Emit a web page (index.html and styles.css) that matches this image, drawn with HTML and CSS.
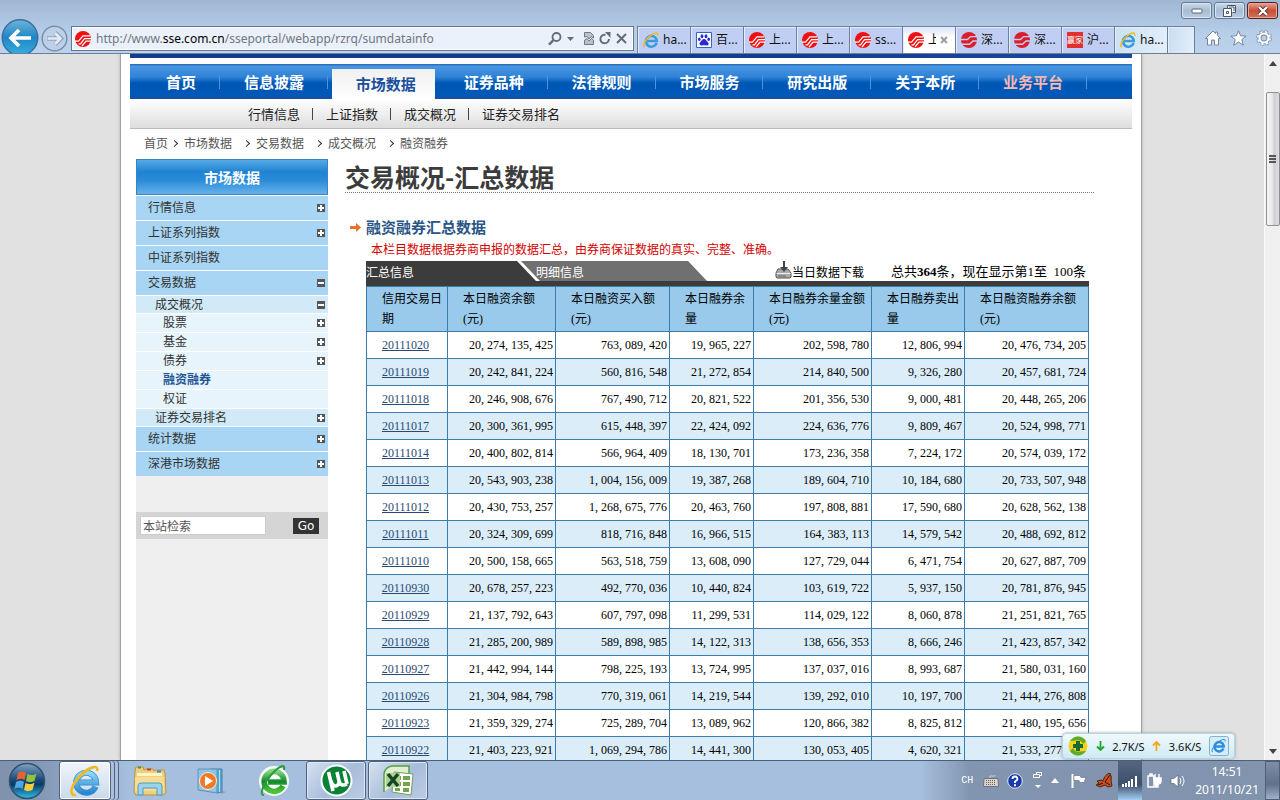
FILE: index.html
```html
<!DOCTYPE html>
<html lang="zh-CN">
<head>
<meta charset="utf-8">
<title>交易概况-汇总数据</title>
<link rel="stylesheet" href="styles.css">
</head>
<body>
<svg class="defs" aria-hidden="true">
  <defs>
    <linearGradient id="orb" x1="0" y1="0" x2="0" y2="1"><stop offset="0" stop-color="#7fa5c4"/><stop offset=".45" stop-color="#1d4c7c"/><stop offset=".6" stop-color="#0b3a66"/><stop offset="1" stop-color="#2fc1ee"/></linearGradient>
    <linearGradient id="back" x1="0" y1="0" x2="0" y2="1"><stop offset="0" stop-color="#6fb4dc"/><stop offset=".5" stop-color="#1f86c4"/><stop offset="1" stop-color="#35b0e4"/></linearGradient>
    <linearGradient id="green" x1="0" y1="0" x2="0" y2="1"><stop offset="0" stop-color="#7fd67f"/><stop offset=".5" stop-color="#12892c"/><stop offset="1" stop-color="#4cc436"/></linearGradient>
    <linearGradient id="ieblue" x1="0" y1="0" x2="0" y2="1"><stop offset="0" stop-color="#8fd8f8"/><stop offset="1" stop-color="#2a86d0"/></linearGradient>
  </defs>
  <symbol id="sse" viewBox="0 0 16 16"><circle cx="8" cy="8" r="8" fill="#ee1111"/><path d="M0 10.2h3.5L8 4.8h7M3.5 12.8h2L9.5 7.6h6.5M7 15l4-4.8h5" fill="none" stroke="#fff" stroke-width="1.2"/></symbol>
  <symbol id="szse" viewBox="0 0 16 16"><circle cx="8" cy="8" r="8" fill="#dc1e2a"/><path d="M16 4.600H9.500L6.500 7.500H0M16 9h-4L8.500 12.200H1" fill="none" stroke="#c3cdf3" stroke-width="1.400"/></symbol>
  <symbol id="ie" viewBox="0 0 16 16"><path d="M13.600 10.800A5.400 5.400 0 1 1 13.400 7.200L13.700 9H4" fill="none" stroke="#3b9be0" stroke-width="2.600"/><path d="M1.800 15C-.8 13.500 2.500 7.500 7.500 3.600 11.500.4 15.600-.2 14.600 4" fill="none" stroke="#f0b91e" stroke-width="1.500"/></symbol>
  <symbol id="ie-big" viewBox="0 0 30 32"><path d="M25.500 21.500A10 10 0 1 1 25.500 14L26 17.500H9" fill="none" stroke="#3189c8" stroke-width="6"/><path d="M25.500 21.500A10 10 0 1 1 25.500 14L26 17.500H9" fill="none" stroke="url(#ieblue)" stroke-width="4.600"/><path d="M6 30C-2 31 1 20 11 10 19 2 29-1 27 6" fill="none" stroke="#f2bb1c" stroke-width="2.600"/></symbol>
</svg>

<header class="browser">
  <div class="caption">
    <button class="win" aria-label="Minimize"><svg width="12" height="6" viewBox="0 0 12 6"><rect x="1" y="1" width="10" height="4" rx="1" fill="#fff" stroke="#5a6470"/></svg></button>
    <button class="win" aria-label="Restore"><svg width="13" height="12" viewBox="0 0 13 12"><path d="M4.500 3.500v-3h8v7h-3M6 2h5v4" fill="#fff" stroke="#4b5664"/><path d="M.5 3.500h8v8h-8zM3.500 6.500h2v2h-2z" fill="#fff" stroke="#4b5664"/></svg></button>
    <button class="win close" aria-label="Close"><svg width="12" height="10" viewBox="0 0 12 10"><path d="M2 1l8 8M10 1L2 9" stroke="#5b2a2a" stroke-width="4"/><path d="M2 1l8 8M10 1L2 9" stroke="#fff" stroke-width="2.400"/></svg></button>
  </div>
  <div class="bar">
    <div class="history">
      <button class="back" aria-label="Back"><svg width="38" height="37" viewBox="0 0 38 37"><circle cx="19" cy="18.500" r="17.800" fill="url(#back)" stroke="#3c6f9c" stroke-width="1.400"/><path d="M10 19h20M18 11l-8 8 8 8" fill="none" stroke="#fff" stroke-width="3.600"/></svg></button>
      <button class="fwd" aria-label="Forward"><svg width="27" height="27" viewBox="0 0 27 27"><circle cx="13.500" cy="13.500" r="12.300" fill="#bcd0e8" stroke="#7a8fa9" stroke-width="1.500"/><path d="M6 13.500h13M14 7.500l6 6-6 6" fill="none" stroke="#8ea2ba" stroke-width="4.500"/><path d="M6.500 13.500H19M14 8l5.500 5.500L14 19" fill="none" stroke="#e2ebf6" stroke-width="2.600"/></svg></button>
    </div>
    <div class="address">
      <svg width="16" height="16"><use href="#sse"/></svg>
      <div class="url">http://www.<b>sse.com.cn</b>/sseportal/webapp/rzrq/sumdatainfo</div>
      <button aria-label="Search"><svg width="14" height="14" viewBox="0 0 14 14"><circle cx="8.500" cy="5" r="4" fill="none" stroke="#646c76" stroke-width="1.800"/><path d="M5.500 8L1 12.700" stroke="#646c76" stroke-width="2.400"/></svg></button>
      <button aria-label="Search options"><svg width="7" height="4"><path d="M0 0h7L3.500 4z" fill="#646c76"/></svg></button>
      <button class="compat" aria-label="Compatibility view"><svg width="10" height="13" viewBox="0 0 10 13"><path d="M.5 5V.5h6l3 3V6L7 4.500 5 7 3 4.500zM.5 8L3 6.500 5 9l2.500-2.500L9.500 8v4.500h-9z" fill="#b9c0ca" stroke="#707882"/></svg></button>
      <button aria-label="Refresh"><svg width="12" height="13" viewBox="0 0 12 13"><path d="M10 7a4.300 4.300 0 1 1-3.500-4.200" fill="none" stroke="#646c76" stroke-width="1.900"/><path d="M6 0h5.500v6z" fill="#646c76"/></svg></button>
      <button aria-label="Stop"><svg width="11" height="11"><path d="M1 1l9 9M10 1l-9 9" stroke="#646c76" stroke-width="2"/></svg></button>
    </div>
    <nav class="tabs">
      <button class="tab"><svg width="16" height="16"><use href="#ie"/></svg>ha...</button>
      <button class="tab"><svg width="16" height="16" viewBox="0 0 16 16"><path d="M.5.5h15v15H.5z" fill="#fff" stroke="#3369b5"/><g fill="#2b2bd0"><ellipse cx="6" cy="4.200" rx="1.400" ry="2"/><ellipse cx="10" cy="4.200" rx="1.400" ry="2"/><ellipse cx="3.300" cy="7.200" rx="1.300" ry="1.700"/><ellipse cx="12.700" cy="7.200" rx="1.300" ry="1.700"/><path d="M8 7c2 0 2.500 2 4 3.500S12 14 10.500 13.500 5.500 13.500 5 13.500 2.500 12 4 10.500 6 7 8 7z"/></g></svg>百...</button>
      <button class="tab"><svg width="16" height="16"><use href="#sse"/></svg>上...</button>
      <button class="tab"><svg width="16" height="16"><use href="#sse"/></svg>上...</button>
      <button class="tab"><svg width="16" height="16"><use href="#sse"/></svg>ss...</button>
      <button class="tab current"><svg width="16" height="16"><use href="#sse"/></svg><span class="cut">上</span><svg width="8" height="8"><path d="M1 1l6 6M7 1L1 7" stroke="#999" stroke-width="1.800"/></svg></button>
      <button class="tab"><svg width="16" height="16"><use href="#szse"/></svg>深...</button>
      <button class="tab"><svg width="16" height="16"><use href="#szse"/></svg>深...</button>
      <button class="tab"><span class="seal">赢家</span>沪...</button>
      <button class="tab pale"><svg width="16" height="16"><use href="#ie"/></svg>ha...</button>
      <button class="tab new" aria-label="New tab"></button>
    </nav>
    <div class="tools">
      <button aria-label="Home"><svg width="16" height="16" viewBox="0 0 16 16"><path d="M8 1l2.500 2.500V2h2v3.500L15.500 8.500h-2V15H9.500v-5h-3v5h-4V8.500h-2z" fill="#fff" stroke="#75879f"/></svg></button>
      <button aria-label="Favorites"><svg width="17" height="16" viewBox="0 0 17 16"><path d="M8.500.8l2.100 5 5.500.3-4.300 3.500 1.500 5.600-4.800-3.200-4.800 3.200 1.500-5.600L.9 6.100l5.500-.3z" fill="#fff" stroke="#75879f"/></svg></button>
      <button aria-label="Tools"><svg width="16" height="16" viewBox="0 0 16 16"><circle cx="8" cy="8" r="6.300" fill="none" stroke="#75879f" stroke-width="3" stroke-dasharray="2.900 2.050"/><circle cx="8" cy="8" r="4.500" fill="none" stroke="#75879f" stroke-width="4"/><circle cx="8" cy="8" r="6.300" fill="none" stroke="#fff" stroke-width="1.600" stroke-dasharray="2.300 2.650" stroke-dashoffset="-.3"/><circle cx="8" cy="8" r="4.500" fill="none" stroke="#fff" stroke-width="2.200"/></svg></button>
    </div>
  </div>
</header>

<div class="view">
  <div class="desk">
    <div class="page">
      <div class="banner"></div>
      <nav class="main-nav">
        <a href="#">首页</a><a href="#">信息披露</a><a href="#" class="on">市场数据</a><a href="#">证券品种</a><a href="#">法律规则</a><a href="#">市场服务</a><a href="#">研究出版</a><a href="#">关于本所</a><a href="#" class="biz">业务平台</a>
      </nav>
      <nav class="sub-nav"><a href="#">行情信息</a><i></i><a href="#">上证指数</a><i></i><a href="#">成交概况</a><i></i><a href="#">证券交易排名</a></nav>
      <nav class="crumbs"><a href="#">首页</a><a href="#">市场数据</a><a href="#">交易数据</a><a href="#">成交概况</a><a href="#">融资融券</a></nav>
      <div class="columns">
        <aside class="side">
          <h2>市场数据</h2>
          <ul class="menu">
            <li><a href="#">行情信息</a><span class="box plus"></span></li>
            <li><a href="#">上证系列指数</a><span class="box plus"></span></li>
            <li><a href="#">中证系列指数</a></li>
            <li><a href="#">交易数据</a><span class="box"></span></li>
            <li class="sub"><a href="#">成交概况</a><span class="box"></span></li>
            <li class="leaf"><a href="#">股票</a><span class="box plus"></span></li>
            <li class="leaf"><a href="#">基金</a><span class="box plus"></span></li>
            <li class="leaf"><a href="#">债券</a><span class="box plus"></span></li>
            <li class="leaf here"><a href="#">融资融券</a></li>
            <li class="leaf"><a href="#">权证</a></li>
            <li class="sub"><a href="#">证券交易排名</a><span class="box plus"></span></li>
            <li><a href="#">统计数据</a><span class="box plus"></span></li>
            <li><a href="#">深港市场数据</a><span class="box plus"></span></li>
          </ul>
          <form class="search"><input type="text" value="本站检索" aria-label="本站检索"><button type="button">Go</button></form>
        </aside>
        <main class="main">
          <h1>交易概况-汇总数据</h1>
          <h3><svg width="11" height="9" viewBox="0 0 11 9"><path d="M0 3h6V0l5 4.500L6 9V6H0z" fill="#e8702a"/></svg>融资融券汇总数据</h3>
          <section class="report">
            <p class="note">本栏目数据根据券商申报的数据汇总，由券商保证数据的真实、完整、准确。</p>
            <div class="report-bar">
              <a href="#" class="rtab first">汇总信息</a>
              <a href="#" class="rtab second">明细信息</a>
              <a href="#" class="download"><svg width="17" height="18" viewBox="0 0 17 18"><path d="M3 8h10l3 4v4l-1 1H2l-1-1v-4z" fill="#ababab" stroke="#555"/><path d="M1.500 12.500h14" stroke="#eee"/><path d="M8 0h2v6h3l-4 5-4-5h3z" fill="#444"/><path d="M3 15h8" stroke="#666"/></svg>当日数据下载</a>
              <span class="count">总共<b>364</b>条，现在显示第1至&nbsp; 100条</span>
            </div>
            <table>
              <colgroup><col class="c1"><col class="c2"><col class="c3"><col class="c4"><col class="c5"><col class="c6"><col class="c7"></colgroup>
              <thead><tr><th>信用交易日期</th><th>本日融资余额<br>(元)</th><th>本日融资买入额<br>(元)</th><th>本日融券余量</th><th>本日融券余量金额<br>(元)</th><th>本日融券卖出量</th><th>本日融资融券余额<br>(元)</th></tr></thead>
              <tbody>
              <tr><td><a href="#">20111020</a></td><td>20, 274, 135, 425</td><td>763, 089, 420</td><td>19, 965, 227</td><td>202, 598, 780</td><td>12, 806, 994</td><td>20, 476, 734, 205</td></tr>
              <tr><td><a href="#">20111019</a></td><td>20, 242, 841, 224</td><td>560, 816, 548</td><td>21, 272, 854</td><td>214, 840, 500</td><td>9, 326, 280</td><td>20, 457, 681, 724</td></tr>
              <tr><td><a href="#">20111018</a></td><td>20, 246, 908, 676</td><td>767, 490, 712</td><td>20, 821, 522</td><td>201, 356, 530</td><td>9, 000, 481</td><td>20, 448, 265, 206</td></tr>
              <tr><td><a href="#">20111017</a></td><td>20, 300, 361, 995</td><td>615, 448, 397</td><td>22, 424, 092</td><td>224, 636, 776</td><td>9, 809, 467</td><td>20, 524, 998, 771</td></tr>
              <tr><td><a href="#">20111014</a></td><td>20, 400, 802, 814</td><td>566, 964, 409</td><td>18, 130, 701</td><td>173, 236, 358</td><td>7, 224, 172</td><td>20, 574, 039, 172</td></tr>
              <tr><td><a href="#">20111013</a></td><td>20, 543, 903, 238</td><td>1, 004, 156, 009</td><td>19, 387, 268</td><td>189, 604, 710</td><td>10, 184, 680</td><td>20, 733, 507, 948</td></tr>
              <tr><td><a href="#">20111012</a></td><td>20, 430, 753, 257</td><td>1, 268, 675, 776</td><td>20, 463, 760</td><td>197, 808, 881</td><td>17, 590, 680</td><td>20, 628, 562, 138</td></tr>
              <tr><td><a href="#">20111011</a></td><td>20, 324, 309, 699</td><td>818, 716, 848</td><td>16, 966, 515</td><td>164, 383, 113</td><td>14, 579, 542</td><td>20, 488, 692, 812</td></tr>
              <tr><td><a href="#">20111010</a></td><td>20, 500, 158, 665</td><td>563, 518, 759</td><td>13, 608, 090</td><td>127, 729, 044</td><td>6, 471, 754</td><td>20, 627, 887, 709</td></tr>
              <tr><td><a href="#">20110930</a></td><td>20, 678, 257, 223</td><td>492, 770, 036</td><td>10, 440, 824</td><td>103, 619, 722</td><td>5, 937, 150</td><td>20, 781, 876, 945</td></tr>
              <tr><td><a href="#">20110929</a></td><td>21, 137, 792, 643</td><td>607, 797, 098</td><td>11, 299, 531</td><td>114, 029, 122</td><td>8, 060, 878</td><td>21, 251, 821, 765</td></tr>
              <tr><td><a href="#">20110928</a></td><td>21, 285, 200, 989</td><td>589, 898, 985</td><td>14, 122, 313</td><td>138, 656, 353</td><td>8, 666, 246</td><td>21, 423, 857, 342</td></tr>
              <tr><td><a href="#">20110927</a></td><td>21, 442, 994, 144</td><td>798, 225, 193</td><td>13, 724, 995</td><td>137, 037, 016</td><td>8, 993, 687</td><td>21, 580, 031, 160</td></tr>
              <tr><td><a href="#">20110926</a></td><td>21, 304, 984, 798</td><td>770, 319, 061</td><td>14, 219, 544</td><td>139, 292, 010</td><td>10, 197, 700</td><td>21, 444, 276, 808</td></tr>
              <tr><td><a href="#">20110923</a></td><td>21, 359, 329, 274</td><td>725, 289, 704</td><td>13, 089, 962</td><td>120, 866, 382</td><td>8, 825, 812</td><td>21, 480, 195, 656</td></tr>
              <tr><td><a href="#">20110922</a></td><td>21, 403, 223, 921</td><td>1, 069, 294, 786</td><td>14, 441, 300</td><td>130, 053, 405</td><td>4, 620, 321</td><td>21, 533, 277, 326</td></tr>
              </tbody>
            </table>
          </section>
        </main>
      </div>
    </div>
  </div>
  <div class="scroll">
    <svg width="8" height="5"><path d="M0 5l4-5 4 5z" fill="#444"/></svg>
    <div class="thumb"><i></i><i></i><i></i></div>
    <svg class="down" width="8" height="5"><path d="M0 0h8L4 5z" fill="#444"/></svg>
  </div>
  <div class="speed">
    <svg width="20" height="20" viewBox="0 0 20 20"><circle cx="10" cy="10" r="9.500" fill="#f2d322"/><path d="M2 5a9.500 9.500 0 0 1 16 0L15 8A6 6 0 0 0 8 4.500zM18 15a9.500 9.500 0 0 1-16 0l3-3a6 6 0 0 0 7 3.500z" fill="#5cab2c"/><path d="M8 5h4v3h3v4h-3v3H8v-3H5V8h3z" fill="#176b2c"/></svg>
    <svg width="9" height="10"><path d="M4.500 0v9M1 5.500l3.500 3.500L8 5.500" fill="none" stroke="#25a32e" stroke-width="1.800"/></svg>
    <span>2.7K/S</span>
    <svg width="9" height="10"><path d="M4.500 10V1M1 4.500L4.500 1 8 4.500" fill="none" stroke="#f3a620" stroke-width="1.800"/></svg>
    <span>3.6K/S</span>
    <svg class="speed-ie" width="20" height="20" viewBox="0 0 20 20"><rect x=".5" y=".5" width="19" height="19" rx="2" fill="#d5edf7" stroke="#7fb4d0"/><path d="M14.500 12.500A4.700 4.700 0 1 1 14.700 9.500V10.500H6.500" fill="none" stroke="#2b8ddb" stroke-width="2.400"/><path d="M4 16c-3-.5 1-7 6-10.500 4-3 7-2.500 6 0" fill="none" stroke="#2b8ddb"/></svg>
  </div>
</div>

<footer class="taskbar">
  <button class="start" aria-label="Start"><svg width="38" height="38" viewBox="0 0 38 38"><circle cx="19" cy="19" r="17.500" fill="url(#orb)" stroke="#34506f" stroke-width="1.500"/><path d="M10 11c3-2 6-1.500 8 0l-1.500 7c-2-1.500-5-2-8 0z" fill="#e8622a"/><path d="M19.500 12c3 1.500 6 1.500 9-.5l-2 7.500c-3 1.500-6 1.500-8.500 0z" fill="#91c43c"/><path d="M8 20c3-2 6-1.500 8 0l-1.500 7c-2-1.500-5-2-8 0z" fill="#4fa6e0"/><path d="M17.500 21c3 1.500 6 1.500 9-.5l-2 7.500c-3 1.500-6 1.500-8.500 0z" fill="#f7cb3a"/></svg></button>
  <button class="app open stacked" aria-label="Internet Explorer"><svg width="30" height="32"><use href="#ie-big"/></svg></button>
  <button class="app" aria-label="Explorer"><svg width="34" height="32" viewBox="0 0 34 32"><path d="M2 6l1-4h7l1 3 2-1h7l1 2 2-1h8l1 3 1 20-3 2H3L1 27z" fill="#eecf7c" stroke="#b99442"/><path d="M4 8h25v3H4z" fill="#fdf3c9"/><path d="M5 2.500h3" stroke="#3b9b45" stroke-width="2"/><path d="M14 4.500h4" stroke="#cf3a2a" stroke-width="2"/><path d="M24 6.500h4" stroke="#3b7fd0" stroke-width="2"/><path d="M2 12h29v14H2z" fill="#f5dd93"/><path d="M5 30V21q0-3 3-3h18q3 0 3 3v9h-5v-7H10v7z" fill="#9bd3ec" stroke="#4d9cc4"/></svg></button>
  <button class="app" aria-label="Media Player"><svg width="30" height="28" viewBox="0 0 30 28"><path d="M14 2h11v23l-5 1z" fill="#5ba6cf" stroke="#3f83ac"/><path d="M22.500 3v22" stroke="#b7dcf0"/><path d="M1 2h19v24L1 23z" fill="#8fc3e3" stroke="#5e94b8"/><path d="M25 24l4 1-5 2z" fill="#8299b5"/><circle cx="11" cy="14" r="8.500" fill="#ee7a25" stroke="#fff" stroke-width=".8"/><path d="M8 9l8 5-8 5z" fill="#fff"/></svg></button>
  <button class="app" aria-label="Green Browser"><svg width="32" height="34" viewBox="0 0 32 34"><circle cx="16" cy="17" r="15" fill="#f7fcf6"/><path d="M25 22A10 10 0 1 1 25.500 14L26 18H10" fill="none" stroke="url(#green)" stroke-width="5.500"/><path d="M6 31C1 32 5 20 13 11S28-1 26 6" fill="none" stroke="#2c9a3c" stroke-width="2"/></svg></button>
  <button class="app open" aria-label="uTorrent"><svg width="33" height="33" viewBox="0 0 33 33"><circle cx="16.500" cy="16.500" r="16" fill="#fff"/><circle cx="16.500" cy="16.500" r="14" fill="#0b8136"/><path d="M8.500 8l4.500 19M11 17c2 8 9 5 8 0L17 8M19 17c1 4 4 5 8 3M24 7l3 13" fill="none" stroke="#fff" stroke-width="3.600"/></svg></button>
  <button class="app open" aria-label="Excel"><svg width="33" height="32" viewBox="0 0 33 32"><path d="M2 27V9Q3 2 10 1h17v7" fill="#dff0d0" stroke="#55a142" stroke-width="1.500"/><path d="M12 7l19 2-2 21-19-3z" fill="#fff" stroke="#799c60"/><path d="M14 11h5v4h-5zM21 11h7v4h-7zM14 17h5v4h-5zM21 17h7v4h-7zM13 23h5v3h-5zM21 23h6v4h-6z" fill="#71a64e"/><path d="M4 8h14v14H4z" fill="#aed28f"/><path d="M6 9l10 12M16 9L6 21" stroke="#17452a" stroke-width="3.500"/></svg></button>
  <div class="tray">
    <span class="ime">CH</span>
    <svg width="16" height="12" viewBox="0 0 16 12"><path d="M7 3Q6 0 9 1t3-1" fill="none" stroke="#ccc"/><path d="M1 3.500h14l.5 8H.5z" fill="#d8d4cc" stroke="#6f7278"/><path d="M3 5.500h10M3 7.500h10M3 9.500h10" stroke="#666" stroke-dasharray="1 1"/></svg>
    <svg width="16" height="16" viewBox="0 0 16 16"><circle cx="8" cy="8" r="7.300" fill="#1b39a8" stroke="#dfe6f4"/><path d="M5.500 6Q5.500 3.500 8 3.500T10.500 6Q10.500 7 8 8.500V10" fill="none" stroke="#fff" stroke-width="1.800"/><path d="M7 11.300h2v2H7z" fill="#fff"/></svg>
    <svg class="restore" width="10" height="17" viewBox="0 0 10 17"><path d="M3.500 2.500v-2h5v3h-2M.500 2.500h6v3h-6z" fill="none" stroke="#fff"/><path d="M2 13h6l-3 3z" fill="#fff"/></svg>
    <svg class="more" width="8" height="5"><path d="M0 5l4-5 4 5z" fill="#fff"/></svg>
    <svg width="16" height="16" viewBox="0 0 16 16"><path d="M1.500 1v14" stroke="#fff" stroke-width="2"/><path d="M3 2.500h6l1 2h5l-1.500 3 .5 2H9l-1-2H3z" fill="#fff" stroke="#4b5a70" stroke-width=".5"/></svg>
    <svg width="18" height="15" viewBox="0 0 18 15"><path d="M8 8Q10 1 15 0q2 4 1 8l1 5-4 1-3-2-5 2-4-2 3-2-2-2 4-1z" fill="#c8501d" stroke="#54210f"/><path d="M10 9l5-7M10 9l5 3M8 10l-5 2" stroke="#2e1308"/></svg>
    <span class="signal"><svg width="16" height="12"><path d="M0 9h2v3H0zM3 8h2v4H3zM6 6h2v6H6zM9 4h2v8H9zM13 1h2v11h-2z" fill="#fff"/></svg></span>
    <svg width="15" height="16" viewBox="0 0 15 16"><path d="M1 3h6v11H1zM3 1h2v2H3z" fill="none" stroke="#fff" stroke-width="1.500"/><path d="M8 1v4M12 1v4M6 5h8v3q0 3-3 3v3H8" fill="#fff" stroke="#fff" stroke-width="1.400"/></svg>
    <svg width="15" height="14" viewBox="0 0 15 14"><path d="M1 4.500h3L8 1v12L4 9.500H1z" fill="#fff" stroke="#4b5a70" stroke-width=".6"/><path d="M10 4q2 3 0 6M12 2q4 5 0 10" fill="none" stroke="#fff"/></svg>
    <div class="clock"><span>14:51</span><span>2011/10/21</span></div>
    <button class="peek" aria-label="Show desktop"></button>
  </div>
</footer>
</body>
</html>
```
FILE: styles.css
```css
* { box-sizing: border-box; }
body {
  margin: 0;
  height: 100vh;
  display: flex;
  flex-direction: column;
  overflow: hidden;
  font: 12px/20px "Liberation Serif", "Noto Sans CJK SC", sans-serif;
  color: #333;
}
button { border: 0; padding: 0; background: none; font: inherit; color: inherit; }
a { color: inherit; text-decoration: none; }
h1, h2, h3, p, ul { margin: 0; padding: 0; list-style: none; }
svg { display: block; flex: none; }
.defs { position: absolute; width: 0; height: 0; }

/* browser frame */
.browser {
  flex: none;
  background: linear-gradient(#9fb7d3, #b6cde8 60%, #bcd2ec);
  border-bottom: 1px solid #6b7f9c;
  font-family: "Noto Sans", "Noto Sans CJK SC", sans-serif;
}
.caption { height: 20px; padding: 2px 2px 0 0; display: flex; justify-content: flex-end; gap: 2px; }
.win {
  width: 31px; height: 17px;
  display: flex; align-items: center; justify-content: center;
  border: 1px solid #64788f; border-radius: 3px;
  background: linear-gradient(#cbdaeb, #a7bcd5 50%, #b9cce2);
  box-shadow: inset 0 0 0 1px #dbe6f2;
}
.win.close { border-color: #5c1d1a; background: linear-gradient(#e3a596, #c8503a 50%, #cf7157); box-shadow: inset 0 0 0 1px #e6aa9c; }
.bar { display: flex; align-items: flex-start; height: 33px; }
.history { display: flex; align-items: flex-start; width: 71px; margin-top: -1px; padding-left: 1px; gap: 2px; height: 34px; overflow: hidden; }
.fwd { margin-top: 6px; }
.address {
  flex: 1; min-width: 0; height: 25px; margin: 6px 3px 0 0; padding: 0 6px 0 3px;
  display: flex; align-items: center; gap: 5px;
  background: #eaf1fa; border: 1px solid #65778e; box-shadow: inset 0 0 0 1px #fff;
}
.url { flex: 1; min-width: 0; overflow: hidden; white-space: nowrap; font-size: 12px; color: #707780; }
.url b { font-weight: 400; color: #000; }
.compat { margin-left: 5px; }
.tabs { display: flex; height: 27px; margin-top: 6px; }
.tab {
  width: 53px; padding-left: 5px; display: flex; align-items: center; gap: 4px;
  overflow: hidden; white-space: nowrap; color: #111; font-size: 12px;
  background: #c0cef4; border: 1px solid #6d7f99; border-width: 1px 0 0 1px; box-shadow: inset 1px 1px 0 #e6edfc;
}
.tab.current { background: linear-gradient(#dbe3fa, #fff 40%); }
.tab.pale { background: linear-gradient(100deg, #c9e1f1, #e4effa); }
.tab.new { width: 28px; background: linear-gradient(100deg, #c9ddf0, #e4effa); border-right-width: 1px; }
.cut { width: 8px; overflow: hidden; }
.seal { width: 16px; height: 16px; flex: none; background: #e03030; color: #fff; font-size: 8px; line-height: 16px; }
.tools { display: flex; gap: 9px; padding: 10px 8px 0 10px; }

/* page viewport */
.view { flex: 1; min-height: 0; display: flex; position: relative; overflow: hidden; background: #e1e1e1; }
.desk { flex: 1; min-width: 0; padding-right: 2px; }
.page { max-width: 1022px; margin: 0 auto; padding: 0 9px; background: #fff; border: 1px solid #a0a0a0; border-width: 0 1px; box-shadow: 0 0 3px #aaa; height: 100%; }
.banner { height: 4px; background: linear-gradient(90deg, #123c8e 60%, #1a4a9c); }
.main-nav {
  margin-top: 6px; height: 35px; padding: 0 45px 0 12px; display: flex;
  font: bold 15px/35px "Noto Sans CJK SC", sans-serif; color: #fff;
  background: linear-gradient(#2e6fbf 0 1px, #4a97e2 2px, #2f82d6 13px, #0056b4 19px, #0058b8 31px, #1a4fa0);
}
.main-nav a { flex: 1 1 0; text-align: center; background: linear-gradient(#4b95dc, #4b95dc) right 12px / 1px 13px no-repeat; }
.main-nav a:first-child { flex: none; width: 78px; }
.main-nav a.on { margin: 5px 0 0 4px; line-height: 29px; color: #1a4f9c; background: linear-gradient(#f0f0f0, #fff) left top / calc(100% - 5px) 100% no-repeat; }
.main-nav a.biz { color: #f5b9b4; }
.sub-nav {
  height: 30px; padding-left: 118px; display: flex; align-items: center;
  font: 13px/28px "Noto Sans CJK SC", sans-serif; color: #222;
  background: linear-gradient(#fff, #f2f2f2 40%, #ddd); border-bottom: 1px solid #bbb;
}
.sub-nav i { width: 1px; height: 12px; margin: 0 13px 0 12px; background: #444; }
.crumbs { height: 30px; padding-left: 14px; display: flex; align-items: center; color: #555; }
.crumbs a { margin-right: 24px; position: relative; }
.crumbs a:first-child { margin-right: 16px; }
.crumbs a + a::before { content: ""; position: absolute; left: -12px; top: 7px; width: 4px; height: 4px; border: solid #333; border-width: 1px 1px 0 0; transform: rotate(45deg); }
.columns { display: flex; align-items: stretch; padding: 0 38px 0 6px; gap: 17px; }

/* left menu */
.side { flex: none; width: 192px; min-height: 602px; background: #efefef; }
.side h2 {
  height: 36px; font: bold 14px/34px "Noto Sans CJK SC", sans-serif; text-align: center; color: #fff;
  border: 1px solid #3a83bd; background: linear-gradient(#57a9e6, #1f83d2 35%, #2a8cd8 60%, #66b1ea);
}
.menu li {
  height: 25px; padding: 0 2px 0 12px; display: flex; align-items: center; justify-content: space-between;
  background: #a7d5f3; border-top: 1px solid #fff;
}
.menu li.sub { height: 18px; padding-left: 19px; background: #d2e9f7; }
.menu li.leaf { height: 19px; padding-left: 27px; background: #e8f4fc; }
.menu li.here { font-weight: 700; color: #1e5595; }
.box { width: 8px; height: 8px; margin-right: 1px; background: linear-gradient(#fff, #fff) center / 6px 2px no-repeat #555; }
.box.plus { background: linear-gradient(#fff, #fff) center / 6px 2px no-repeat, linear-gradient(#fff, #fff) center / 2px 6px no-repeat #555; }
.search { margin-top: 36px; height: 27px; padding: 0 9px 0 4px; display: flex; align-items: center; justify-content: space-between; background: #d5d5d5; }
.search input { width: 126px; height: 19px; padding: 0 2px; border: 1px solid #ccc; background: #fff; font: 12px "Noto Sans CJK SC", sans-serif; color: #555; }
.search button { width: 26px; height: 16px; background: #333; color: #fff; font: 12px/16px "DejaVu Sans", sans-serif; }

/* report */
.main { flex: 1; min-width: 0; }
.main h1 { height: 34px; font: bold 25px/34px "Noto Sans CJK SC", sans-serif; color: #3c3c3c; border-bottom: 1px dotted #777; }
.main h3 { display: flex; align-items: center; gap: 5px; margin-top: 22px; padding-left: 5px; font: bold 15px/24px "Noto Sans CJK SC", sans-serif; color: #2a5585; }
.report { padding: 0 5px 0 21px; }
.note { padding-left: 5px; line-height: 22px; color: #d40000; }
.report-bar { display: flex; height: 25px; border-bottom: 5px solid #3c3c3c; color: #000; }
.rtab { color: #fff; line-height: 24px; height: 20px; }
.rtab.first { width: 170px; background: #3c3c3c; clip-path: polygon(0 0, 151px 0, 170px 100%, 0 100%); }
.rtab.second { width: 186px; margin-left: -15px; padding-left: 15px; background: #707070; clip-path: polygon(0 0, 167px 0, 186px 100%, 19px 100%); }
.download { margin-left: auto; display: flex; line-height: 24px; height: 20px; }
.count { margin-left: 27px; padding-right: 3px; white-space: nowrap; font-size: 13px; line-height: 22px; height: 20px; }
table { width: 100%; table-layout: fixed; border-collapse: collapse; color: #000; }
.c1 { width: 81px; } .c2 { width: 108px; } .c3 { width: 114px; } .c4 { width: 84px; } .c5 { width: 118px; } .c6 { width: 93px; } .c7 { width: 124px; }
th, td { border: 1px solid #3b7ca8; }
th { height: 45px; padding: 2px 0 2px 15px; font-weight: 400; text-align: left; vertical-align: top; background: #99caeb; }
td { height: 27px; padding: 0 2px 1px; text-align: right; }
td:first-child { text-align: center; padding-right: 5px; }
td a { color: #2a4a75; text-decoration: underline; }
tbody tr:nth-child(even) { background: #dbedf9; }

/* scroll bar */
.scroll { width: 16px; background: #f0f0f0; border-left: 1px solid #fafafa; display: flex; flex-direction: column; align-items: center; padding: 7px 0 6px; }
.thumb { width: 14px; height: 134px; margin-top: 26px; border: 1px solid #8f8f8f; border-radius: 2px; background: linear-gradient(90deg, #f6f6f6, #e6e6e8 50%, #cfcfd6 55%, #dcdce0); display: flex; flex-direction: column; align-items: center; justify-content: center; gap: 1px; }
.thumb i { width: 7px; height: 2px; background: #555; }
.down { margin-top: auto; }

/* floating network meter */
.speed {
  position: absolute; right: 45px; bottom: 1px; width: 173px; height: 26px; padding: 0 5px;
  display: flex; align-items: center; justify-content: space-between;
  background: linear-gradient(#f0f9fc, #cfeaf4); border: 1px solid #b9d4df; border-radius: 4px; box-shadow: 0 0 3px #89a;
  font: 11px "Noto Sans", sans-serif; color: #111;
}

/* taskbar */
.taskbar {
  flex: none; height: 40px; display: flex; align-items: stretch; border-top: 1px solid #4c5e78;
  background: linear-gradient(90deg, #7f91ab, #8398b5 40px, #a6bfde 130px, #a6bfde 920px, #8295b0 970px, #8193ad);
}
.start { width: 54px; margin-right: 5px; display: flex; align-items: center; justify-content: center; }
.app { width: 62px; display: flex; align-items: center; justify-content: center; }
.app.open { width: 60px; margin: 0 1px; border: 1px solid #50627e; border-radius: 3px; background: linear-gradient(135deg, #d5e2f2, #a8bddb 55%, #bccde4); box-shadow: inset 0 0 0 1px #dce7f4; }
.app.stacked { width: 52px; margin: 0 8px 0 0; background: linear-gradient(#f0f5fb, #c9d9ec); box-shadow: inset 0 0 0 1px #fff, 3px 0 0 #a9bfdc, 4px 0 0 #50627e, 7px 0 0 #a9bfdc, 8px 0 0 #50627e; }
.tray { margin-left: auto; display: flex; align-items: center; gap: 8px; color: #fff; font-family: "Noto Sans", sans-serif; }
.ime { font: 10px "Liberation Mono", monospace; margin-right: 2px; }
.restore { margin-left: 2px; }
.more { margin-right: 4px; }
.signal { align-self: stretch; width: 24px; display: flex; align-items: center; justify-content: center; background: linear-gradient(#53657f, #3d4f6a 60%, #a5cdf5); margin: 0 -3px; }
.clock { display: flex; flex-direction: column; align-items: center; line-height: 18px; margin-left: 2px; }
.peek { align-self: stretch; width: 15px; margin-left: -2px; border: 1px solid #4f5f78; background: linear-gradient(#7e8ea6, #5f718c 60%, #a0b0c8); }
```
